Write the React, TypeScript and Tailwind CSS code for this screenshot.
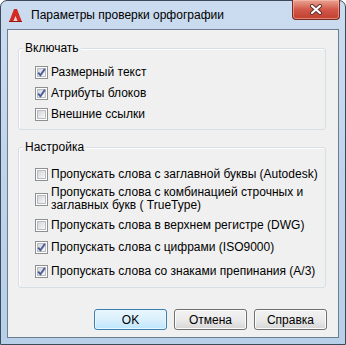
import type { ReactNode } from "react";

function CheckBox({ checked }: { checked?: boolean }) {
  return (
    <span className="flex h-[13px] w-[13px] shrink-0 items-center justify-center border border-[#8e8f8f] bg-white">
      <span className="relative h-[9px] w-[9px] border border-[#b9bdc3] bg-gradient-to-br from-[#d3d6da] to-[#f7f7f7]">
        {checked && (
          <svg className="absolute -left-[1px] -top-[1px]" width="9" height="9" viewBox="0 0 9 9">
            <path d="M1.2 4.6 L3.4 7.2 L7.9 0.9" fill="none" stroke="#4a5d9a" strokeWidth="1.9" />
          </svg>
        )}
      </span>
    </span>
  );
}

function Row({ checked, children, className }: { checked?: boolean; children: ReactNode; className?: string }) {
  return (
    <div className={`flex items-center gap-[3px] ${className ?? ""}`}>
      <CheckBox checked={checked} />
      <span className="leading-[15px]">{children}</span>
    </div>
  );
}

function GroupBox({ title, className, children }: { title: string; className?: string; children: ReactNode }) {
  return (
    <div className={`relative ml-[10px] mr-[12px] rounded-[3px] border border-[#d5dfe5] pl-[16px] shadow-[inset_1px_1px_0_#ffffff] ${className ?? ""}`}>
      <span className="absolute -top-[8px] left-[4px] bg-[#f0f0f0] px-[2px] leading-[15px]">{title}</span>
      {children}
    </div>
  );
}

function Button({ children, primary }: { children: ReactNode; primary?: boolean }) {
  return (
    <button
      className={
        primary
          ? "flex h-[21px] w-[73px] items-center justify-center rounded-[3px] border border-[#3c7fb1] bg-gradient-to-b from-[#eaf6fd] via-[#d9f0fc] to-[#bee6fd] shadow-[inset_0_0_0_1px_#e9f6fd] text-black"
          : "flex h-[21px] w-[73px] items-center justify-center rounded-[3px] border border-[#707070] bg-gradient-to-b from-[#f2f2f2] via-[#ebebeb] to-[#d6d6d6] shadow-[inset_0_0_0_1px_#fcfcfc] text-black"
      }
    >
      {children}
    </button>
  );
}

export default function App() {
  return (
    <div className="h-[345px] w-[346px] bg-white font-['Liberation_Sans',Arial,sans-serif] text-[12px] text-black">
      <div className="flex h-[345px] w-[346px] flex-col rounded-t-[7px] border border-[#3e4a5a] bg-gradient-to-b from-[#cbdcf0] via-[#bfd4eb] to-[#b7cfe9]">
        {/* Title bar */}
        <div className="relative flex h-[28px] items-center pl-[8px]">
          <svg width="13" height="13" viewBox="0 0 13 13" className="shrink-0">
            <polygon points="5,0 8,0 13,13 0,13" fill="#d42a24" />
            <polygon points="6.5,7 9,13 4,13" fill="#f4d4d2" />
            <rect x="0" y="12" width="13" height="1" fill="#9a1510" />
          </svg>
          <span className="ml-[9px] pt-[1px] text-[12px] leading-[15px]">Параметры проверки орфографии</span>
          <div className="absolute -top-[1px] right-[5px] flex h-[20px] w-[48px] items-center justify-center rounded-b-[4px] border border-t-0 border-[#7a2a22] bg-gradient-to-b from-[#e8a493] via-[#d2584a] to-[#c13f2c] shadow-[inset_0_0_0_1px_rgba(255,200,190,0.5)]">
            <svg width="14" height="11" viewBox="0 0 14 11">
              <path d="M3 2 L11 9 M11 2 L3 9" stroke="#5b2b28" strokeWidth="4" strokeLinecap="round" />
              <path d="M3 2 L11 9 M11 2 L3 9" stroke="#ffffff" strokeWidth="2.2" strokeLinecap="round" />
            </svg>
          </div>
        </div>

        {/* Client area */}
        <div className="mx-[6px] mb-[6px] flex flex-1 flex-col border border-[#6d7d90] bg-[#f0f0f0]">
          <GroupBox title="Включать" className="mt-[18px] h-[82px] pt-[13px]">
            <div className="flex h-[21px] items-center">
              <Row checked>Размерный текст</Row>
            </div>
            <div className="flex h-[21px] items-center">
              <Row checked>Атрибуты блоков</Row>
            </div>
            <div className="flex h-[21px] items-center">
              <Row>Внешние ссылки</Row>
            </div>
          </GroupBox>

          <GroupBox title="Настройка" className="mt-[17px] h-[141px] pt-[19px]">
            <Row>Пропускать слова с заглавной буквы (Autodesk)</Row>
            <div className="mt-[4px] flex items-center gap-[3px]">
              <CheckBox />
              <span className="leading-[13px]">
                Пропускать слова с комбинацией строчных и
                <br />
                заглавных букв ( TrueType)
              </span>
            </div>
            <Row className="mt-[6px]">Пропускать слова в верхнем регистре (DWG)</Row>
            <Row checked className="mt-[7px]">
              Пропускать слова с цифрами (ISO9000)
            </Row>
            <Row checked className="mt-[9px]">
              Пропускать слова со знаками препинания (A/3)
            </Row>
          </GroupBox>

          <div className="mr-[11px] mt-[21px] flex justify-end gap-[7px]">
            <Button primary>OK</Button>
            <Button>Отмена</Button>
            <Button>Справка</Button>
          </div>
        </div>
      </div>
    </div>
  );
}
